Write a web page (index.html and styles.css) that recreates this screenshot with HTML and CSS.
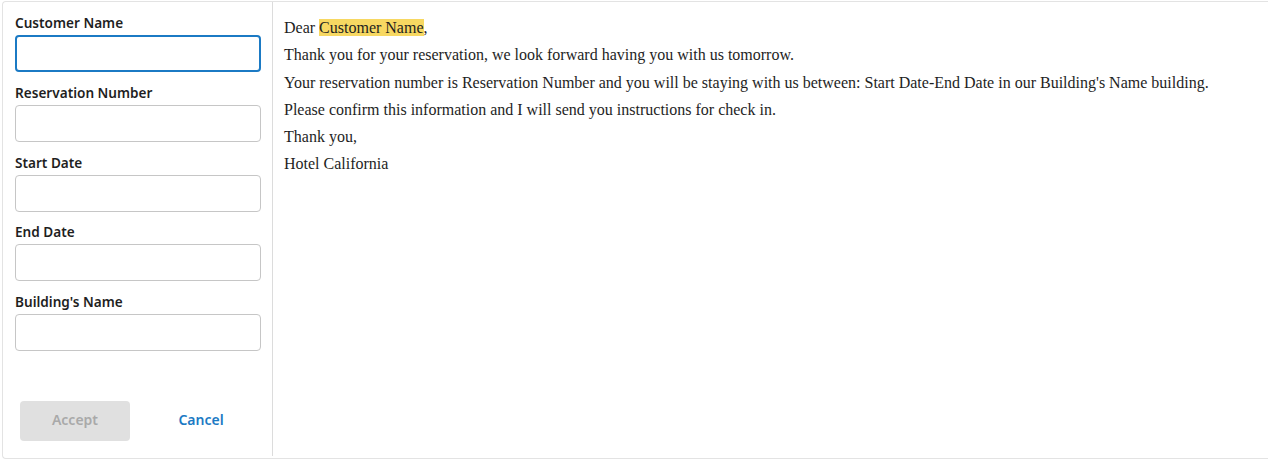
FILE: index.html
```html
<!DOCTYPE html>
<html>
<head>
<meta charset="utf-8">
<link rel="stylesheet" href="styles.css">
</head>
<body>
<div class="frame">
  <div class="form">
    <div class="fields">
      <div class="field">
        <label class="label">Customer Name</label>
        <div class="input focused"></div>
      </div>
      <div class="field">
        <label class="label">Reservation Number</label>
        <div class="input"></div>
      </div>
      <div class="field">
        <label class="label">Start Date</label>
        <div class="input"></div>
      </div>
      <div class="field">
        <label class="label">End Date</label>
        <div class="input"></div>
      </div>
      <div class="field">
        <label class="label">Building's Name</label>
        <div class="input"></div>
      </div>
    </div>
    <div class="actions">
      <button class="btn accept">Accept</button>
      <button class="btn cancel">Cancel</button>
    </div>
  </div>
  <div class="preview">
    <p>Dear <span class="hl">Customer Name</span>,</p>
    <p>Thank you for your reservation, we look forward having you with us tomorrow.</p>
    <p>Your reservation number is Reservation Number and you will be staying with us between: Start Date-End Date in our Building's Name building.</p>
    <p>Please confirm this information and I will send you instructions for check in.</p>
    <p>Thank you,</p>
    <p>Hotel California</p>
  </div>
</div>
</body>
</html>
```

FILE: styles.css
```css
html, body {
  margin: 0;
  padding: 0;
  background: #ffffff;
}
.frame {
  margin: 1px 0 0 2px;
  height: 458px;
  box-sizing: border-box;
  border: 1px solid #e3e3e3;
  border-right: none;
  border-radius: 4px 0 0 4px;
  display: flex;
}
.form {
  width: 270px;
  box-sizing: border-box;
  border-right: 1px solid #dcdcdc;
  padding: 12px 11px 0 12px;
  display: flex;
  flex-direction: column;
  margin-bottom: 2px;
}
.fields {
  display: flex;
  flex-direction: column;
}
.field {
  display: flex;
  flex-direction: column;
  margin-bottom: 11.75px;
}
.label {
  font-family: "Noto Sans", sans-serif;
  font-weight: 600;
  font-size: 13.6px;
  line-height: 18px;
  color: #1f1f1f;
  margin-bottom: 3px;
}
.input {
  height: 37px;
  box-sizing: border-box;
  border: 1px solid #c6c6c6;
  border-radius: 4px;
}
.input.focused {
  border: 2px solid #1b7ac4;
}
.actions {
  margin-top: auto;
  margin-bottom: 15px;
  display: flex;
  justify-content: space-between;
  padding: 0 5px;
}
.btn {
  width: 110px;
  height: 40px;
  border: none;
  border-radius: 4px;
  font-family: "Noto Sans", sans-serif;
  font-weight: 600;
  font-size: 14px;
  line-height: 38px;
  background: transparent;
  padding: 0 0 2px 0;
}
.accept {
  background: #e0e0e0;
  color: #a9a9a9;
}
.cancel {
  color: #1b7ac4;
}
.preview {
  flex: 1;
  padding: 17px 0 0 11px;
  font-family: "Liberation Serif", "Times New Roman", serif;
  font-size: 16px;
  color: #1e1e1e;
}
.preview p {
  margin: 0 0 9.25px 0;
  line-height: 18px;
}
.hl {
  background: #f7d862;
}
```
